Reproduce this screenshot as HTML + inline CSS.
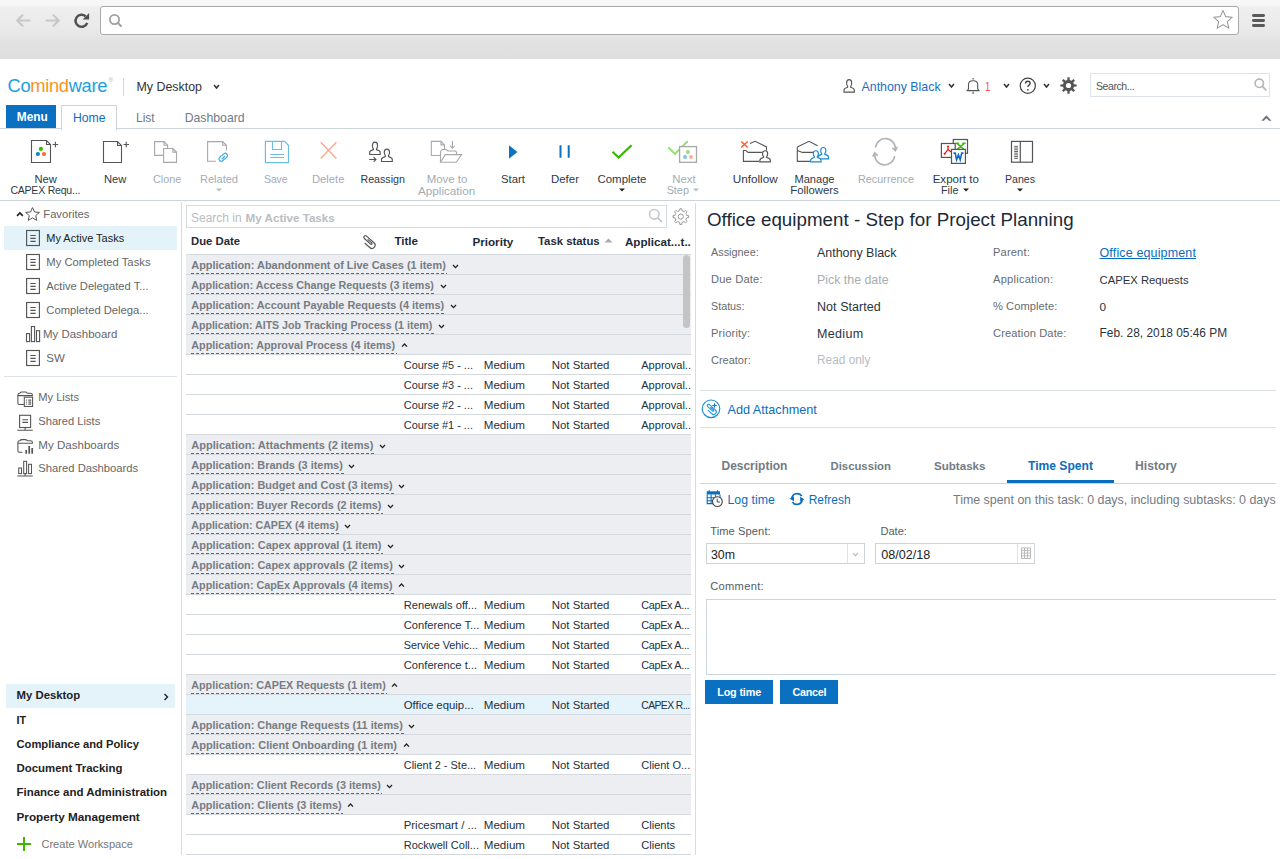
<!DOCTYPE html>
<html><head><meta charset="utf-8"><style>
html,body{margin:0;padding:0;width:1280px;height:859px;overflow:hidden;background:#fff;position:relative;font-family:"Liberation Sans",sans-serif;}
.t{position:absolute;line-height:1;white-space:nowrap;}
svg{overflow:visible}
</style></head><body>
<div style="position:absolute;left:0px;top:0px;width:1280px;height:59px;background:linear-gradient(#f8f8f8 0px,#f6f6f6 5px,#efefef 7px,#e9e9e9 30px,#e1e1e1 44px,#dfdfdf 59px);"></div><div style="position:absolute;left:100px;top:6px;width:1137px;height:27px;background:#fff;border:1px solid #a9a9a9;border-radius:3px;"></div><svg style="position:absolute;left:15px;top:13px;" width="17" height="15" viewBox="0 0 17 15" fill="none"><path d="M7.5 2.2L2.2 7.5L7.5 12.8M2.6 7.5H14.5" stroke="#c8c8c8" stroke-width="2.2" stroke-linecap="round" stroke-linejoin="round"/></svg><svg style="position:absolute;left:44px;top:13px;" width="17" height="15" viewBox="0 0 17 15" fill="none"><path d="M9.5 2.2L14.8 7.5L9.5 12.8M14.4 7.5H2.5" stroke="#c8c8c8" stroke-width="2.2" stroke-linecap="round" stroke-linejoin="round"/></svg><svg style="position:absolute;left:73px;top:12px;" width="17" height="17" viewBox="0 0 17 17" fill="none"><path d="M12.6 4.4A6 6 0 1 0 14.2 10.8" stroke="#505050" stroke-width="2.5" fill="none"/><path d="M9.6 7.6H16.1V1Z" fill="#505050"/></svg><svg style="position:absolute;left:108px;top:13px;" width="15" height="15" viewBox="0 0 15 15" fill="none"><circle cx="6.5" cy="6.5" r="4.6" stroke="#a0a0a0" stroke-width="1.8"/><path d="M10 10L13 13" stroke="#a0a0a0" stroke-width="2" stroke-linecap="round"/></svg><svg style="position:absolute;left:1212px;top:9px;" width="22" height="21" viewBox="0 0 22 21" fill="none"><path d="M11 1.5L13.7 7.6L20.3 8.2L15.3 12.6L16.8 19.1L11 15.7L5.2 19.1L6.7 12.6L1.7 8.2L8.3 7.6Z" stroke="#9a9a9a" stroke-width="1.1" stroke-linejoin="round" fill="#fff"/></svg><div style="position:absolute;left:1252px;top:14.0px;width:13px;height:2.8px;background:#5a5a5a;border-radius:1.4px;"></div><div style="position:absolute;left:1252px;top:19.0px;width:13px;height:2.8px;background:#5a5a5a;border-radius:1.4px;"></div><div style="position:absolute;left:1252px;top:24.0px;width:13px;height:2.8px;background:#5a5a5a;border-radius:1.4px;"></div><div class="t" style="left:7.5px;top:76.6px;font-size:18.3px;letter-spacing:-0.3px;color:#1b9fdf;">Co<span style="color:#f7941d">mind</span>ware</div><div class="t" style="left:108.6px;top:76.5px;font-size:6px;color:#7cc4ea;">&reg;</div><div style="position:absolute;left:123px;top:78px;width:1px;height:18px;background:#d6d6d6;"></div><svg style="position:absolute;left:212.5px;top:84px;" width="7" height="5" viewBox="0 0 7 5" fill="none"><path d="M1 1L3.5 4L6 1" stroke="#333" stroke-width="1.5" fill="none"/></svg><svg style="position:absolute;left:947.5px;top:83.3px;" width="7" height="5" viewBox="0 0 7 5" fill="none"><path d="M1 1L3.5 4L6 1" stroke="#333" stroke-width="1.5" fill="none"/></svg><svg style="position:absolute;left:965px;top:77px;" width="16" height="18" viewBox="0 0 16 18" fill="none"><path d="M1.6 13.6H14.6M2.4 13.6L3.5 11.9V7.4C3.5 5 5.300 3.7 8.1 3.7C10.9 3.7 12.7 5 12.7 7.4V11.9L13.8 13.6" stroke="#555" stroke-width="1.1" fill="none"/><path d="M8.1 1V2.6M8.1 14.7V16.9" stroke="#555" stroke-width="1.1"/></svg><svg style="position:absolute;left:1002.5px;top:83.3px;" width="7" height="5" viewBox="0 0 7 5" fill="none"><path d="M1 1L3.5 4L6 1" stroke="#333" stroke-width="1.5" fill="none"/></svg><svg style="position:absolute;left:1019px;top:77px;" width="18" height="18" viewBox="0 0 18 18" fill="none"><circle cx="8.8" cy="8.8" r="7.6" stroke="#444" stroke-width="1.2"/><path d="M6.5 6.6c0-1.4 1-2.3 2.3-2.3s2.3.9 2.3 2.1c0 1.6-2.2 1.8-2.2 3.700" stroke="#444" stroke-width="1.4" fill="none"/><circle cx="8.9" cy="12.8" r=".9" fill="#444"/></svg><svg style="position:absolute;left:1042.5px;top:83.3px;" width="7" height="5" viewBox="0 0 7 5" fill="none"><path d="M1 1L3.5 4L6 1" stroke="#333" stroke-width="1.5" fill="none"/></svg><svg style="position:absolute;left:1060px;top:77px;" width="17" height="17" viewBox="0 0 17 17" fill="none"><path d="M13.97 7.28 L16.63 7.42 L16.63 9.58 L13.97 9.72 L13.23 11.50 L15.01 13.48 L13.48 15.01 L11.50 13.23 L9.72 13.97 L9.58 16.63 L7.42 16.63 L7.28 13.97 L5.50 13.23 L3.52 15.01 L1.99 13.48 L3.77 11.50 L3.03 9.72 L0.37 9.58 L0.37 7.42 L3.03 7.28 L3.77 5.50 L1.99 3.52 L3.52 1.99 L5.50 3.77 L7.28 3.03 L7.42 0.37 L9.58 0.37 L9.72 3.03 L11.50 3.77 L13.48 1.99 L15.01 3.52 L13.23 5.50Z" fill="#555"/><circle cx="8.5" cy="8.5" r="2.6" fill="#fff"/></svg><div style="position:absolute;left:1090px;top:73px;width:178px;height:22px;background:#fff;border:1px solid #dde3e8;"></div><svg style="position:absolute;left:1254px;top:78px;" width="13" height="13" viewBox="0 0 13 13" fill="none"><circle cx="5.3" cy="5.3" r="4.2" stroke="#b5b5b5" stroke-width="1.6"/><path d="M8.4 8.4L11.8 11.8" stroke="#b5b5b5" stroke-width="1.8" stroke-linecap="round"/></svg><svg style="position:absolute;left:0;top:0;overflow:visible" width="1280" height="859"><path d="M1261.3 120.8L1266.4 115.3L1271.5 120.8H1268.9L1266.4 118.2L1263.900 120.8Z" fill="#70757f"/></svg><div style="position:absolute;left:0px;top:128px;width:1280px;height:1px;background:#ccd4db;"></div><div style="position:absolute;left:6px;top:105px;width:50px;height:23px;background:#0a70c2;"></div><div style="position:absolute;left:61px;top:105px;width:54px;height:24px;background:#fff;border:1px solid #ccd4db;border-bottom:none;"></div><div style="position:absolute;left:0px;top:200px;width:1280px;height:1px;background:#ccd4db;"></div><svg style="position:absolute;left:0;top:0;overflow:visible" width="1280" height="859" viewBox="0 0 1280 859" fill="none"><path d="M31.5 140.5H46.5L50.5 144.5V162.5H31.5Z" stroke="#555" stroke-width="1.1" fill="#fff" stroke-linejoin="miter"/><path d="M46.5 140.5V144.5H50.5" stroke="#555" stroke-width="1.1" fill="none"/><circle cx="40.9" cy="148.9" r="2.1" fill="#33c000"/><circle cx="37.9" cy="154" r="2.1" fill="#0a86c8"/><circle cx="44" cy="154" r="2.1" fill="#ff6a2a"/><path d="M52.7 144.5H58.2M55.4 141.8V147.2" stroke="#555" stroke-width="1.1"/><path d="M103.5 141.5H117.5L121.5 145.5V162.5H103.5Z" stroke="#555" stroke-width="1.1" fill="#fff" stroke-linejoin="miter"/><path d="M117.5 141.5V145.5H121.5" stroke="#555" stroke-width="1.1" fill="none"/><path d="M123.5 144.5H129M126.2 141.8V147.2" stroke="#555" stroke-width="1.1"/><path d="M154.6 141.6H164.0L167.6 145.2V155.4H154.6Z" stroke="#a8a8a8" stroke-width="1.1" fill="#fff" stroke-linejoin="miter"/><path d="M164.0 141.6V145.2H167.6" stroke="#a8a8a8" stroke-width="1.1" fill="none"/><path d="M163.6 148.5H172.9L176.5 152.1V162.4H163.6Z" stroke="#a8a8a8" stroke-width="1.1" fill="#fff" stroke-linejoin="miter"/><path d="M172.9 148.5V152.1H176.5" stroke="#a8a8a8" stroke-width="1.1" fill="none"/><path d="M215.9 161.3H207.6V141.6H222.7L226.4 145.3V150.4" stroke="#a8a8a8" stroke-width="1.1" fill="none"/><path d="M222.7 141.6V145.3H226.4" stroke="#a8a8a8" stroke-width="1.1" fill="none"/><g stroke="#3aabdf" stroke-width="1.2" fill="none"><path d="M221.6 155.4l-2.2 2.2a2.3 2.3 0 0 0 3.2 3.2l2.2-2.2"/><path d="M224.9 159.1l2.2-2.2a2.3 2.3 0 0 0-3.2-3.2l-2.2 2.2"/><path d="M221.7 159.3L225 156"/></g><g stroke="#6bbde3" stroke-width="1.2" fill="none"><path d="M265.4 141.4H284.6L288.5 145.5V162.6H265.4Z"/><path d="M272.5 141.4V149.5H281.5V141.4"/><path d="M270.2 154.5H284M270.2 157.5H284"/></g><path d="M320.7 142.2L336.4 158.6M336.4 142.2L320.7 158.6" stroke="#ffab8f" stroke-width="1.5"/><path transform="translate(843.5 79.2) scale(0.9417 1.0308)" d="M6 0.5C7.8 0.5 8.7 1.8 8.7 3.6C8.7 5.2 8.1 6.3 7.6 6.9V7.8C10 8.4 11.5 9.3 11.5 10.6V12.5H0.5V10.6C0.5 9.3 2 8.4 4.4 7.8V6.9C3.9 6.300 3.3 5.200 3.3 3.600C3.3 1.8 4.2 0.5 6 0.5Z" stroke="#555" stroke-width="1.166" fill="#fff" vector-effect="none"/><path transform="translate(369.2 141.7) scale(0.9583 1.0231)" d="M6 0.5C7.8 0.5 8.7 1.8 8.7 3.6C8.7 5.2 8.1 6.3 7.6 6.9V7.8C10 8.4 11.5 9.3 11.5 10.6V12.5H0.5V10.6C0.5 9.3 2 8.4 4.4 7.8V6.9C3.9 6.300 3.3 5.200 3.3 3.600C3.3 1.8 4.2 0.5 6 0.5Z" stroke="#555" stroke-width="1.161" fill="#fff" vector-effect="none"/><path transform="translate(381 148.6) scale(0.9833 1.0308)" d="M6 0.5C7.8 0.5 8.7 1.8 8.7 3.6C8.7 5.2 8.1 6.3 7.6 6.9V7.8C10 8.4 11.5 9.3 11.5 10.6V12.5H0.5V10.6C0.5 9.3 2 8.4 4.4 7.8V6.9C3.9 6.300 3.3 5.200 3.3 3.600C3.3 1.8 4.2 0.5 6 0.5Z" stroke="#555" stroke-width="1.142" fill="#fff" vector-effect="none"/><path d="M369.2 159.5H376M373.6 157.1L376 159.5L373.6 161.9" stroke="#555" stroke-width="1.1" fill="none"/><path d="M431.3 141.4H441.0L444.5 144.9V155.5H431.3Z" stroke="#a8a8a8" stroke-width="1.1" fill="#fff" stroke-linejoin="miter"/><path d="M441.0 141.4V144.9H444.5" stroke="#a8a8a8" stroke-width="1.1" fill="none"/><path d="M440.5 162.3V151.5L442.3 149.5H446.3L447.8 151H455.3L456.5 152.2V154.6" stroke="#a8a8a8" stroke-width="1.1" fill="#fff"/><path d="M440.5 162.3L445.2 154.6H461.6L456.3 162.3Z" stroke="#a8a8a8" stroke-width="1.1" fill="#fff"/><path d="M452.4 141V148M450.2 145.9L452.4 148.1L454.6 145.9" stroke="#a8a8a8" stroke-width="1.1" fill="none"/><path d="M509 145.2L517.4 152L509 158.8Z" fill="#0a72c0"/><path d="M560.5 145.2V157.8M568.7 145.2V157.8" stroke="#0a72c0" stroke-width="2"/><path d="M612.5 151.8L618.6 157.6L631.5 145.2" stroke="#36b800" stroke-width="2.2" fill="none"/><path d="M668.8 147.9L674.9 153.9L687.2 141.8" stroke="#93e070" stroke-width="2" fill="none" stroke-linecap="round"/><rect x="679.6" y="146.6" width="16.9" height="15.7" stroke="#a8a8a8" stroke-width="1.3" fill="#fff"/><circle cx="687.9" cy="152" r="2" fill="#9ada7a"/><circle cx="685" cy="156.9" r="2" fill="#7ec4e4"/><circle cx="691" cy="156.9" r="2" fill="#ffae90"/><path d="M750 143.4L755.1 141.3L766.5 146.9V150.5" stroke="#555" stroke-width="1.1" fill="none"/><path d="M759.4 161.4H743.4V150.5H745.8L748.1 152.4H762.2" stroke="#555" stroke-width="1.1" fill="none"/><path transform="translate(759.4 150.3) scale(0.9500 0.9308)" d="M6 0.5C7.8 0.5 8.7 1.8 8.7 3.6C8.7 5.2 8.1 6.3 7.6 6.9V7.8C10 8.4 11.5 9.3 11.5 10.6V12.5H0.5V10.6C0.5 9.3 2 8.4 4.4 7.8V6.9C3.9 6.300 3.3 5.200 3.3 3.600C3.3 1.8 4.2 0.5 6 0.5Z" stroke="#555" stroke-width="1.223" fill="#fff" vector-effect="none"/><path d="M741.2 141.5L747.7 147.5M747.7 141.5L741.2 147.5" stroke="#ff5a2a" stroke-width="1.5"/><path d="M797.3 146.9L809 141.3L817.6 145.8" stroke="#555" stroke-width="1.1" fill="none"/><path d="M810.2 161.4H797.3V146.9M797.3 150.5L802.4 152.4H813.3" stroke="#555" stroke-width="1.1" fill="none"/><path transform="translate(817.6 147.0) scale(0.9500 0.9462)" d="M6 0.5C7.8 0.5 8.7 1.8 8.7 3.6C8.7 5.2 8.1 6.3 7.6 6.9V7.8C10 8.4 11.5 9.3 11.5 10.6V12.5H0.5V10.6C0.5 9.3 2 8.4 4.4 7.8V6.9C3.9 6.300 3.3 5.200 3.3 3.600C3.3 1.8 4.2 0.5 6 0.5Z" stroke="#1a8ad4" stroke-width="1.213" fill="#fff" vector-effect="none"/><path transform="translate(810.2 150.3) scale(0.9417 0.9308)" d="M6 0.5C7.8 0.5 8.7 1.8 8.7 3.6C8.7 5.2 8.1 6.3 7.6 6.9V7.8C10 8.4 11.5 9.3 11.5 10.6V12.5H0.5V10.6C0.5 9.3 2 8.4 4.4 7.8V6.9C3.9 6.300 3.3 5.200 3.3 3.600C3.3 1.8 4.2 0.5 6 0.5Z" stroke="#1a8ad4" stroke-width="1.228" fill="#fff" vector-effect="none"/><g stroke="#b3b3b3" stroke-width="1.6" fill="none"><path d="M875.5 147.5A9.5 9.5 0 0 1 895.3 149.5"/><path d="M894.6 156A9.5 9.5 0 0 1 874.8 154"/><path d="M892.4 147.8L895.3 150.6L897.4 146.9"/><path d="M877.7 155.6L874.8 152.9L872.8 156.5"/></g><rect x="953.3" y="139.5" width="14.2" height="13.8" stroke="#555" stroke-width="1.2" fill="#fff"/><path d="M957 143.4L964.2 149.6M964.2 143.4L957 149.6M955.6 143.3H958.9M962.3 143.3H965.6" stroke="#33c000" stroke-width="1.4" fill="none"/><rect x="941.4" y="143.5" width="13.8" height="13.9" stroke="#555" stroke-width="1.2" fill="#fff"/><path d="M948 146.3V149.4L945 153.5M948 149.4L951 152" stroke="#ff0000" stroke-width="1.2" fill="none"/><circle cx="944.6" cy="153.8" r="1" fill="#f00"/><circle cx="948" cy="146.3" r=".9" fill="#f00"/><rect x="951.5" y="149.4" width="13.9" height="14" stroke="#555" stroke-width="1.2" fill="#fff"/><path d="M953.5 153.1H955.2L956.6 159.8L958.4 154.8L960.2 159.8L961.7 153.1H963.5" stroke="#0a6cc8" stroke-width="1.6" fill="none"/><rect x="1011.5" y="141.4" width="21" height="20.8" stroke="#555" stroke-width="1.2" fill="none"/><path d="M1020.3 141.4V162.2" stroke="#555" stroke-width="1.2"/><path d="M1014.2 146.4H1018 M1014.2 148.1H1018 M1014.2 149.8H1018 M1014.2 151.5H1018 M1014.2 153.2H1018 M1014.2 154.9H1018 M1014.2 156.6H1018 M1014.2 158.3H1018 " stroke="#555" stroke-width=".9"/></svg><svg style="position:absolute;left:215.4px;top:188px" width="8" height="4" viewBox="0 0 8 4"><path d="M1 0.5H7L4 3.5Z" fill="#b5bcc3"/></svg><svg style="position:absolute;left:618px;top:188.2px" width="8" height="4" viewBox="0 0 8 4"><path d="M1 0.5H7L4 3.5Z" fill="#222"/></svg><svg style="position:absolute;left:691.7px;top:188px" width="8" height="4" viewBox="0 0 8 4"><path d="M1 0.5H7L4 3.5Z" fill="#b5bcc3"/></svg><svg style="position:absolute;left:961.5px;top:188px" width="8" height="4" viewBox="0 0 8 4"><path d="M1 0.5H7L4 3.5Z" fill="#222"/></svg><svg style="position:absolute;left:1016px;top:188px" width="8" height="4" viewBox="0 0 8 4"><path d="M1 0.5H7L4 3.5Z" fill="#222"/></svg><div style="position:absolute;left:181px;top:202px;width:1px;height:653px;background:#d5dce2;"></div><svg style="position:absolute;left:15.5px;top:212.3px;" width="7.8" height="4.8" viewBox="0 0 7.8 4.8" fill="none"><path d="M1 3.8L3.9 1L6.8 3.8" stroke="#222" stroke-width="1.7" fill="none"/></svg><div style="position:absolute;left:4px;top:226px;width:173px;height:24px;background:#e4f2fa;"></div><div style="position:absolute;left:4px;top:376px;width:173px;height:1px;background:#dde3e8;"></div><svg style="position:absolute;left:0;top:0;overflow:visible" width="1280" height="859" viewBox="0 0 1280 859" fill="none"><path d="M32.5 207.6L34.5 212L39.4 212.4L35.7 215.6L36.8 220.4L32.5 217.9L28.2 220.4L29.3 215.6L25.6 212.4L30.5 212Z" stroke="#555" stroke-width="1" stroke-linejoin="round" fill="#fff"/><rect x="26.6" y="230.5" width="12.8" height="15" stroke="#555" stroke-width="1.15" fill="none"/><path d="M30.3 235.5H35.7M30.3 238.4H35.7M30.3 241.4H35.7" stroke="#555" stroke-width="1.1"/><rect x="26.6" y="254.5" width="12.8" height="15" stroke="#555" stroke-width="1.15" fill="none"/><path d="M30.3 259.5H35.7M30.3 262.4H35.7M30.3 265.4H35.7" stroke="#555" stroke-width="1.1"/><rect x="26.6" y="278.5" width="12.8" height="15" stroke="#555" stroke-width="1.15" fill="none"/><path d="M30.3 283.5H35.7M30.3 286.4H35.7M30.3 289.4H35.7" stroke="#555" stroke-width="1.1"/><rect x="26.6" y="302.5" width="12.8" height="15" stroke="#555" stroke-width="1.15" fill="none"/><path d="M30.3 307.5H35.7M30.3 310.4H35.7M30.3 313.4H35.7" stroke="#555" stroke-width="1.1"/><g stroke="#555" stroke-width="1.1" fill="none"><rect x="26.5" y="333.6" width="3.1" height="8"/><rect x="31.4" y="326.5" width="3.2" height="15.1"/><rect x="36.5" y="330.7" width="3.1" height="10.9"/></g><rect x="26.6" y="350.5" width="12.8" height="15" stroke="#555" stroke-width="1.15" fill="none"/><path d="M30.3 355.5H35.7M30.3 358.4H35.7M30.3 361.4H35.7" stroke="#555" stroke-width="1.1"/><g stroke="#555" stroke-width="1.05" fill="none"><path d="M17.9 395.6V394.9C17.9 393.6 18.8 393.2 19.8 393.2C20.3 392.2 21 392 22 392H25.3C26.2 392 26.8 392.4 27.3 393.2H30.5C31.8 393.2 32.4 393.8 32.4 395V395.6Z" stroke="#555" stroke-width="1.05" fill="none"/><path d="M17.9 395.6V403.3Q17.9 404.5 19.1 404.5H24.1"/><rect x="24.3" y="397.2" width="8.3" height="9.3" fill="#fff"/></g><path d="M26.3 400.1H27.1M28.4 400.1H31.2M26.3 402.1H27.1M28.4 402.1H31.2M26.3 404.1H27.1M28.4 404.1H31.2" stroke="#555" stroke-width="1.05"/><g stroke="#555" stroke-width="1.1" fill="none"><rect x="19.6" y="415.3" width="11" height="12.2"/><path d="M22.3 419.7H28M22.3 422.4H28M25.1 427.5V430.3M17.3 430.3H32.8"/></g><g stroke="#555" stroke-width="1.05" fill="none"><path d="M17.9 443.20000000000005V442.5C17.9 441.20000000000005 18.8 440.8 19.8 440.8C20.3 439.8 21 439.6 22 439.6H25.3C26.2 439.6 26.8 440.0 27.3 440.8H30.5C31.8 440.8 32.4 441.40000000000003 32.4 442.6V443.20000000000005Z" stroke="#555" stroke-width="1.05" fill="none"/><path d="M17.9 443.2V451Q17.9 452.2 19.1 452.2H22.5"/></g><path d="M26.2 450.1V453.8M29.2 446.1V453.8M32.2 448.1V453.8" stroke="#555" stroke-width="1.7"/><g stroke="#555" stroke-width="1.05" fill="none"><rect x="18.7" y="468" width="2.8" height="5.6"/><rect x="23.7" y="461.3" width="2.9" height="12.3"/><rect x="28.6" y="464.3" width="2.9" height="9.3"/><path d="M17.3 476H32.8M25.1 473.6V476"/></g></svg><div style="position:absolute;left:6px;top:684px;width:169px;height:24px;background:#e4f2fa;"></div><svg style="position:absolute;left:163px;top:693px;" width="6" height="8" viewBox="0 0 6 8" fill="none"><path d="M1.5 1L4.5 4L1.5 7" stroke="#222" stroke-width="1.4" fill="none"/></svg><svg style="position:absolute;left:16px;top:836px;" width="16" height="16" viewBox="0 0 16 16" fill="none"><path d="M8 1V15M1 8H15" stroke="#3cb800" stroke-width="2"/></svg><div style="position:absolute;left:186px;top:205px;width:479px;height:21px;background:#fff;border:1px solid #d3dae0;"></div><svg style="position:absolute;left:648px;top:208px;" width="15" height="15" viewBox="0 0 15 15" fill="none"><circle cx="6.3" cy="6.3" r="4.8" stroke="#c8c8c8" stroke-width="1.6"/><path d="M9.8 9.8L13.3 13.3" stroke="#c8c8c8" stroke-width="1.9" stroke-linecap="round"/></svg><svg style="position:absolute;left:672px;top:208px;" width="18" height="18" viewBox="0 0 18 18" fill="none"><path d="M14.68 7.41 L16.64 7.65 L16.64 9.55 L14.68 9.79 L13.80 11.92 L15.01 13.48 L13.68 14.81 L12.12 13.60 L9.99 14.48 L9.75 16.44 L7.85 16.44 L7.61 14.48 L5.48 13.60 L3.92 14.81 L2.59 13.48 L3.80 11.92 L2.92 9.79 L0.96 9.55 L0.96 7.65 L2.92 7.41 L3.80 5.28 L2.59 3.72 L3.92 2.39 L5.48 3.60 L7.61 2.72 L7.85 0.76 L9.75 0.76 L9.99 2.72 L12.12 3.60 L13.68 2.39 L15.01 3.72 L13.80 5.28Z" stroke="#999" stroke-width="1" fill="#fff"/><circle cx="8.8" cy="8.6" r="2.6" stroke="#999" stroke-width="1"/></svg><svg style="position:absolute;left:0;top:0;overflow:visible" width="1280" height="859" fill="none"><path transform="translate(366 238.8) rotate(42)" d="M1.8 4.0L8.6 4.0A3.2 3.2 0 0 0 8.6 -2.4L-1.4 -2.4A1.625 1.625 0 0 0 -1.4 0.85L7.0 0.85A0.8 0.8 0 0 0 7.0 -0.75L1.6 -0.75" stroke="#555" stroke-width="1.15"/></svg><svg style="position:absolute;left:604px;top:238px;" width="9" height="5" viewBox="0 0 9 5" fill="none"><path d="M0.5 4.5L4.5 0.5L8.5 4.5Z" fill="#aaa"/></svg><div style="position:absolute;left:186px;top:254px;width:505px;height:20px;background:#eceef1;"></div><div style="position:absolute;left:186px;top:254px;width:505px;height:1px;background:#d3d9de;"></div><div style="position:absolute;left:191px;top:273px;width:256.3px;height:1px;background:repeating-linear-gradient(90deg,#666 0 3px,transparent 3px 5px);"></div><svg style="position:absolute;left:451.8px;top:264px;" width="7" height="4.6" viewBox="0 0 7 4.6" fill="none"><path d="M1 1L3.5 3.6L6 1" stroke="#222" stroke-width="1.35" fill="none"/></svg><div style="position:absolute;left:186px;top:274px;width:505px;height:20px;background:#eceef1;"></div><div style="position:absolute;left:186px;top:274px;width:505px;height:1px;background:#d3d9de;"></div><div style="position:absolute;left:191px;top:293px;width:244.5px;height:1px;background:repeating-linear-gradient(90deg,#666 0 3px,transparent 3px 5px);"></div><svg style="position:absolute;left:440.0px;top:284px;" width="7" height="4.6" viewBox="0 0 7 4.6" fill="none"><path d="M1 1L3.5 3.6L6 1" stroke="#222" stroke-width="1.35" fill="none"/></svg><div style="position:absolute;left:186px;top:294px;width:505px;height:20px;background:#eceef1;"></div><div style="position:absolute;left:186px;top:294px;width:505px;height:1px;background:#d3d9de;"></div><div style="position:absolute;left:191px;top:313px;width:254.8px;height:1px;background:repeating-linear-gradient(90deg,#666 0 3px,transparent 3px 5px);"></div><svg style="position:absolute;left:450.3px;top:304px;" width="7" height="4.6" viewBox="0 0 7 4.6" fill="none"><path d="M1 1L3.5 3.6L6 1" stroke="#222" stroke-width="1.35" fill="none"/></svg><div style="position:absolute;left:186px;top:314px;width:505px;height:20px;background:#eceef1;"></div><div style="position:absolute;left:186px;top:314px;width:505px;height:1px;background:#d3d9de;"></div><div style="position:absolute;left:191px;top:333px;width:242.8px;height:1px;background:repeating-linear-gradient(90deg,#666 0 3px,transparent 3px 5px);"></div><svg style="position:absolute;left:438.3px;top:324px;" width="7" height="4.6" viewBox="0 0 7 4.6" fill="none"><path d="M1 1L3.5 3.6L6 1" stroke="#222" stroke-width="1.35" fill="none"/></svg><div style="position:absolute;left:186px;top:334px;width:505px;height:20px;background:#eceef1;"></div><div style="position:absolute;left:186px;top:334px;width:505px;height:1px;background:#d3d9de;"></div><div style="position:absolute;left:191px;top:353px;width:205.60000000000002px;height:1px;background:repeating-linear-gradient(90deg,#666 0 3px,transparent 3px 5px);"></div><svg style="position:absolute;left:401.1px;top:342.5px;" width="7" height="4.6" viewBox="0 0 7 4.6" fill="none"><path d="M1 3.6L3.5 1L6 3.6" stroke="#222" stroke-width="1.35" fill="none"/></svg><div style="position:absolute;left:186px;top:354px;width:505px;height:1px;background:#d3d9de;"></div><div style="position:absolute;left:186px;top:374px;width:505px;height:1px;background:#d3d9de;"></div><div style="position:absolute;left:186px;top:394px;width:505px;height:1px;background:#d3d9de;"></div><div style="position:absolute;left:186px;top:414px;width:505px;height:1px;background:#d3d9de;"></div><div style="position:absolute;left:186px;top:434px;width:505px;height:20px;background:#eceef1;"></div><div style="position:absolute;left:186px;top:434px;width:505px;height:1px;background:#d3d9de;"></div><div style="position:absolute;left:191px;top:453px;width:183.8px;height:1px;background:repeating-linear-gradient(90deg,#666 0 3px,transparent 3px 5px);"></div><svg style="position:absolute;left:379.3px;top:444px;" width="7" height="4.6" viewBox="0 0 7 4.6" fill="none"><path d="M1 1L3.5 3.6L6 1" stroke="#222" stroke-width="1.35" fill="none"/></svg><div style="position:absolute;left:186px;top:454px;width:505px;height:20px;background:#eceef1;"></div><div style="position:absolute;left:186px;top:454px;width:505px;height:1px;background:#d3d9de;"></div><div style="position:absolute;left:191px;top:473px;width:152.8px;height:1px;background:repeating-linear-gradient(90deg,#666 0 3px,transparent 3px 5px);"></div><svg style="position:absolute;left:348.3px;top:464px;" width="7" height="4.6" viewBox="0 0 7 4.6" fill="none"><path d="M1 1L3.5 3.6L6 1" stroke="#222" stroke-width="1.35" fill="none"/></svg><div style="position:absolute;left:186px;top:474px;width:505px;height:20px;background:#eceef1;"></div><div style="position:absolute;left:186px;top:474px;width:505px;height:1px;background:#d3d9de;"></div><div style="position:absolute;left:191px;top:493px;width:202.8px;height:1px;background:repeating-linear-gradient(90deg,#666 0 3px,transparent 3px 5px);"></div><svg style="position:absolute;left:398.3px;top:484px;" width="7" height="4.6" viewBox="0 0 7 4.6" fill="none"><path d="M1 1L3.5 3.6L6 1" stroke="#222" stroke-width="1.35" fill="none"/></svg><div style="position:absolute;left:186px;top:494px;width:505px;height:20px;background:#eceef1;"></div><div style="position:absolute;left:186px;top:494px;width:505px;height:1px;background:#d3d9de;"></div><div style="position:absolute;left:191px;top:513px;width:191.60000000000002px;height:1px;background:repeating-linear-gradient(90deg,#666 0 3px,transparent 3px 5px);"></div><svg style="position:absolute;left:387.1px;top:504px;" width="7" height="4.6" viewBox="0 0 7 4.6" fill="none"><path d="M1 1L3.5 3.6L6 1" stroke="#222" stroke-width="1.35" fill="none"/></svg><div style="position:absolute;left:186px;top:514px;width:505px;height:20px;background:#eceef1;"></div><div style="position:absolute;left:186px;top:514px;width:505px;height:1px;background:#d3d9de;"></div><div style="position:absolute;left:191px;top:533px;width:148.60000000000002px;height:1px;background:repeating-linear-gradient(90deg,#666 0 3px,transparent 3px 5px);"></div><svg style="position:absolute;left:344.1px;top:524px;" width="7" height="4.6" viewBox="0 0 7 4.6" fill="none"><path d="M1 1L3.5 3.6L6 1" stroke="#222" stroke-width="1.35" fill="none"/></svg><div style="position:absolute;left:186px;top:534px;width:505px;height:20px;background:#eceef1;"></div><div style="position:absolute;left:186px;top:534px;width:505px;height:1px;background:#d3d9de;"></div><div style="position:absolute;left:191px;top:553px;width:191.60000000000002px;height:1px;background:repeating-linear-gradient(90deg,#666 0 3px,transparent 3px 5px);"></div><svg style="position:absolute;left:387.1px;top:544px;" width="7" height="4.6" viewBox="0 0 7 4.6" fill="none"><path d="M1 1L3.5 3.6L6 1" stroke="#222" stroke-width="1.35" fill="none"/></svg><div style="position:absolute;left:186px;top:554px;width:505px;height:20px;background:#eceef1;"></div><div style="position:absolute;left:186px;top:554px;width:505px;height:1px;background:#d3d9de;"></div><div style="position:absolute;left:191px;top:573px;width:202.8px;height:1px;background:repeating-linear-gradient(90deg,#666 0 3px,transparent 3px 5px);"></div><svg style="position:absolute;left:398.3px;top:564px;" width="7" height="4.6" viewBox="0 0 7 4.6" fill="none"><path d="M1 1L3.5 3.6L6 1" stroke="#222" stroke-width="1.35" fill="none"/></svg><div style="position:absolute;left:186px;top:574px;width:505px;height:20px;background:#eceef1;"></div><div style="position:absolute;left:186px;top:574px;width:505px;height:1px;background:#d3d9de;"></div><div style="position:absolute;left:191px;top:593px;width:202.8px;height:1px;background:repeating-linear-gradient(90deg,#666 0 3px,transparent 3px 5px);"></div><svg style="position:absolute;left:398.3px;top:582.5px;" width="7" height="4.6" viewBox="0 0 7 4.6" fill="none"><path d="M1 3.6L3.5 1L6 3.6" stroke="#222" stroke-width="1.35" fill="none"/></svg><div style="position:absolute;left:186px;top:594px;width:505px;height:1px;background:#d3d9de;"></div><div style="position:absolute;left:186px;top:614px;width:505px;height:1px;background:#d3d9de;"></div><div style="position:absolute;left:186px;top:634px;width:505px;height:1px;background:#d3d9de;"></div><div style="position:absolute;left:186px;top:654px;width:505px;height:1px;background:#d3d9de;"></div><div style="position:absolute;left:186px;top:674px;width:505px;height:20px;background:#eceef1;"></div><div style="position:absolute;left:186px;top:674px;width:505px;height:1px;background:#d3d9de;"></div><div style="position:absolute;left:191px;top:693px;width:195.8px;height:1px;background:repeating-linear-gradient(90deg,#666 0 3px,transparent 3px 5px);"></div><svg style="position:absolute;left:391.3px;top:682.5px;" width="7" height="4.6" viewBox="0 0 7 4.6" fill="none"><path d="M1 3.6L3.5 1L6 3.6" stroke="#222" stroke-width="1.35" fill="none"/></svg><div style="position:absolute;left:186px;top:694px;width:505px;height:20px;background:#e5f3fb;"></div><div style="position:absolute;left:186px;top:694px;width:505px;height:1px;background:#d3d9de;"></div><div style="position:absolute;left:186px;top:714px;width:505px;height:20px;background:#eceef1;"></div><div style="position:absolute;left:186px;top:714px;width:505px;height:1px;background:#d3d9de;"></div><div style="position:absolute;left:191px;top:733px;width:212.7px;height:1px;background:repeating-linear-gradient(90deg,#666 0 3px,transparent 3px 5px);"></div><svg style="position:absolute;left:408.2px;top:724px;" width="7" height="4.6" viewBox="0 0 7 4.6" fill="none"><path d="M1 1L3.5 3.6L6 1" stroke="#222" stroke-width="1.35" fill="none"/></svg><div style="position:absolute;left:186px;top:734px;width:505px;height:20px;background:#eceef1;"></div><div style="position:absolute;left:186px;top:734px;width:505px;height:1px;background:#d3d9de;"></div><div style="position:absolute;left:191px;top:753px;width:207.0px;height:1px;background:repeating-linear-gradient(90deg,#666 0 3px,transparent 3px 5px);"></div><svg style="position:absolute;left:402.5px;top:742.5px;" width="7" height="4.6" viewBox="0 0 7 4.6" fill="none"><path d="M1 3.6L3.5 1L6 3.6" stroke="#222" stroke-width="1.35" fill="none"/></svg><div style="position:absolute;left:186px;top:754px;width:505px;height:1px;background:#d3d9de;"></div><div style="position:absolute;left:186px;top:774px;width:505px;height:20px;background:#eceef1;"></div><div style="position:absolute;left:186px;top:774px;width:505px;height:1px;background:#d3d9de;"></div><div style="position:absolute;left:191px;top:793px;width:190.7px;height:1px;background:repeating-linear-gradient(90deg,#666 0 3px,transparent 3px 5px);"></div><svg style="position:absolute;left:386.2px;top:784px;" width="7" height="4.6" viewBox="0 0 7 4.6" fill="none"><path d="M1 1L3.5 3.6L6 1" stroke="#222" stroke-width="1.35" fill="none"/></svg><div style="position:absolute;left:186px;top:794px;width:505px;height:20px;background:#eceef1;"></div><div style="position:absolute;left:186px;top:794px;width:505px;height:1px;background:#d3d9de;"></div><div style="position:absolute;left:191px;top:813px;width:151.5px;height:1px;background:repeating-linear-gradient(90deg,#666 0 3px,transparent 3px 5px);"></div><svg style="position:absolute;left:347.0px;top:802.5px;" width="7" height="4.6" viewBox="0 0 7 4.6" fill="none"><path d="M1 3.6L3.5 1L6 3.6" stroke="#222" stroke-width="1.35" fill="none"/></svg><div style="position:absolute;left:186px;top:814px;width:505px;height:1px;background:#d3d9de;"></div><div style="position:absolute;left:186px;top:834px;width:505px;height:1px;background:#d3d9de;"></div><div style="position:absolute;left:186px;top:854px;width:505px;height:1px;background:#d3d9de;"></div><div style="position:absolute;left:682.5px;top:255px;width:7.3px;height:72.5px;background:#c4c4c4;border-radius:3.5px;"></div><div style="position:absolute;left:695px;top:203px;width:1px;height:652px;background:#d5dce2;"></div><div style="position:absolute;left:700px;top:390px;width:576px;height:1px;background:#d9dee3;"></div><svg style="position:absolute;left:0;top:0;overflow:visible" width="1280" height="859" fill="none"><circle cx="711" cy="408.8" r="8.8" stroke="#1a8ad4" stroke-width="1.15"/><path transform="translate(709 406.8) rotate(42) scale(0.8)" d="M1.8 4.0L8.6 4.0A3.2 3.2 0 0 0 8.6 -2.4L-1.4 -2.4A1.625 1.625 0 0 0 -1.4 0.85L7.0 0.85A0.8 0.8 0 0 0 7.0 -0.75L1.6 -0.75" stroke="#2a9ade" stroke-width="1.4"/><path d="M712.2 405.5H716.8M714.5 403.2V407.8" stroke="#1a7cc8" stroke-width="1.2"/></svg><div style="position:absolute;left:700px;top:427px;width:576px;height:1px;background:#d9dee3;"></div><div style="position:absolute;left:700px;top:483px;width:576px;height:1px;background:#ccd4db;"></div><div style="position:absolute;left:1007px;top:480px;width:107px;height:3px;background:#0a6ebd;"></div><svg style="position:absolute;left:0;top:0;overflow:visible" width="1280" height="859" fill="none"><rect x="706.7" y="491.3" width="13.3" height="3.2" fill="#0a6ebd"/><path d="M709.2 490V492M717.6 490V492" stroke="#0a6ebd" stroke-width="1"/><path d="M707.2 494.5V503.6H720V494.5M711.1 494.5V503.6M715.5 494.5V503.6M707.2 497.7H720M707.2 500.800H720" stroke="#0a6ebd" stroke-width="1.1"/><circle cx="717.4" cy="501.6" r="4.9" fill="#fff" stroke="#444" stroke-width="1.1"/><path d="M717.2 498.6V502H719.9" stroke="#444" stroke-width="1"/><path d="M801.6 496.2A5.2 5.2 0 0 0 791.9 498.6M792.4 501.8A5.2 5.2 0 0 0 802.1 499.4" stroke="#0a6ebd" stroke-width="1.7"/><path d="M789.6 498.8L793.9 496.2L794 501.2Z" fill="#0a6ebd"/><path d="M804.4 499.2L800.1 496.800L800.2 501.8Z" fill="#0a6ebd"/></svg><div style="position:absolute;left:705.5px;top:543px;width:157px;height:19px;background:#fff;border:1px solid #ccd4db;"></div><div style="position:absolute;left:847px;top:544px;width:1px;height:19px;background:#dde3e8;"></div><svg style="position:absolute;left:852px;top:552px;" width="7" height="4.8" viewBox="0 0 7 4.8" fill="none"><path d="M1 1L3.5 3.8L6 1" stroke="#aaa" stroke-width="1.1" fill="none"/></svg><div style="position:absolute;left:875px;top:543px;width:158px;height:19px;background:#fff;border:1px solid #ccd4db;"></div><div style="position:absolute;left:1017px;top:544px;width:1px;height:19px;background:#dde3e8;"></div><svg style="position:absolute;left:1021px;top:547px;" width="11" height="12" viewBox="0 0 11 12" fill="none"><g stroke="#b5b5b5" stroke-width=".9" fill="none"><rect x="0.5" y="1" width="9" height="10.5"/><path d="M0.5 3.6H9.5M0.5 6.2H9.5M0.5 8.8H9.5M3.5 1V11.5M6.5 1V11.5"/></g></svg><div style="position:absolute;left:705.5px;top:599px;width:575px;height:74px;background:#fff;border:1px solid #ccd4db;"></div><div style="position:absolute;left:704.9px;top:680px;width:68.1px;height:24px;background:#0a70c2;"></div><div style="position:absolute;left:780px;top:680px;width:57.9px;height:24px;background:#0a70c2;"></div><div style="position:absolute;left:1276px;top:203px;width:4px;height:656px;background:#fff;"></div>
<div class="t" style="left:136.50px;top:81.20px;font-size:12.41px;font-weight:normal;color:#333;letter-spacing:0.000px;">My Desktop</div><div class="t" style="left:861.50px;top:81.21px;font-size:12.39px;font-weight:normal;color:#1a6fbf;letter-spacing:0.000px;">Anthony Black</div><div class="t" style="left:985.20px;top:80.84px;font-size:12.00px;font-weight:normal;color:#f05050;transform:scaleX(0.8);transform-origin:left;">1</div><div class="t" style="left:1096.00px;top:80.75px;font-size:10.57px;font-weight:normal;color:#555;letter-spacing:-0.450px;">Search...</div><div class="t" style="left:16.80px;top:112.05px;font-size:11.87px;font-weight:bold;color:#fff;letter-spacing:0.000px;">Menu</div><div class="t" style="left:73.00px;top:111.85px;font-size:12.22px;font-weight:normal;color:#0a6ebd;letter-spacing:0.000px;">Home</div><div class="t" style="left:136.00px;top:112.03px;font-size:12.02px;font-weight:normal;color:#6e7b88;letter-spacing:0.000px;">List</div><div class="t" style="left:184.70px;top:111.82px;font-size:12.26px;font-weight:normal;color:#6e7b88;letter-spacing:0.000px;">Dashboard</div><div class="t" style="left:34.50px;top:173.92px;font-size:11.20px;font-weight:normal;color:#2d3a48;letter-spacing:0.000px;">New</div><div class="t" style="left:10.40px;top:185.49px;font-size:10.53px;font-weight:normal;color:#2d3a48;letter-spacing:-0.213px;">CAPEX Requ...</div><div class="t" style="left:103.90px;top:173.92px;font-size:11.20px;font-weight:normal;color:#2d3a48;letter-spacing:0.000px;">New</div><div class="t" style="left:152.90px;top:174.20px;font-size:10.87px;font-weight:normal;color:#a3acb5;letter-spacing:0.000px;">Clone</div><div class="t" style="left:200.00px;top:174.07px;font-size:11.02px;font-weight:normal;color:#a3acb5;letter-spacing:-0.000px;">Related</div><div class="t" style="left:264.05px;top:174.49px;font-size:10.53px;font-weight:normal;color:#a3acb5;letter-spacing:-0.165px;">Save</div><div class="t" style="left:311.95px;top:173.88px;font-size:11.24px;font-weight:normal;color:#a3acb5;letter-spacing:0.000px;">Delete</div><div class="t" style="left:360.45px;top:174.36px;font-size:10.67px;font-weight:normal;color:#2d3a48;letter-spacing:0.000px;">Reassign</div><div class="t" style="left:426.65px;top:173.71px;font-size:11.44px;font-weight:normal;color:#a3acb5;letter-spacing:0.000px;">Move to</div><div class="t" style="left:418.00px;top:184.50px;font-size:11.69px;font-weight:normal;color:#a3acb5;letter-spacing:0.000px;">Application</div><div class="t" style="left:501.00px;top:173.78px;font-size:11.36px;font-weight:normal;color:#2d3a48;letter-spacing:0.000px;">Start</div><div class="t" style="left:551.00px;top:173.71px;font-size:11.45px;font-weight:normal;color:#2d3a48;letter-spacing:0.000px;">Defer</div><div class="t" style="left:597.50px;top:173.71px;font-size:11.45px;font-weight:normal;color:#2d3a48;letter-spacing:0.000px;">Complete</div><div class="t" style="left:672.30px;top:173.77px;font-size:11.38px;font-weight:normal;color:#a3acb5;letter-spacing:0.000px;">Next</div><div class="t" style="left:666.65px;top:185.22px;font-size:10.84px;font-weight:normal;color:#a3acb5;letter-spacing:0.000px;">Step</div><div class="t" style="left:732.70px;top:173.47px;font-size:11.73px;font-weight:normal;color:#2d3a48;letter-spacing:0.000px;">Unfollow</div><div class="t" style="left:794.45px;top:174.01px;font-size:11.10px;font-weight:normal;color:#2d3a48;letter-spacing:0.000px;">Manage</div><div class="t" style="left:790.25px;top:184.80px;font-size:11.33px;font-weight:normal;color:#2d3a48;letter-spacing:0.000px;">Followers</div><div class="t" style="left:858.00px;top:174.23px;font-size:10.83px;font-weight:normal;color:#a3acb5;letter-spacing:0.000px;">Recurrence</div><div class="t" style="left:932.65px;top:173.61px;font-size:11.57px;font-weight:normal;color:#2d3a48;letter-spacing:0.000px;">Export to</div><div class="t" style="left:941.00px;top:185.26px;font-size:10.80px;font-weight:normal;color:#2d3a48;letter-spacing:0.000px;">File</div><div class="t" style="left:1005.00px;top:174.44px;font-size:10.58px;font-weight:normal;color:#2d3a48;letter-spacing:0.000px;">Panes</div><div class="t" style="left:43.30px;top:208.91px;font-size:11.21px;font-weight:normal;color:#666;letter-spacing:0.000px;">Favorites</div><div class="t" style="left:46.30px;top:233.21px;font-size:10.98px;font-weight:normal;color:#222;letter-spacing:0.000px;">My Active Tasks</div><div class="t" style="left:46.30px;top:256.98px;font-size:11.25px;font-weight:normal;color:#666;letter-spacing:0.000px;">My Completed Tasks</div><div class="t" style="left:46.30px;top:281.04px;font-size:11.18px;font-weight:normal;color:#666;letter-spacing:0.000px;">Active Delegated T...</div><div class="t" style="left:46.30px;top:304.98px;font-size:11.24px;font-weight:normal;color:#666;letter-spacing:0.000px;">Completed Delega...</div><div class="t" style="left:43.00px;top:328.80px;font-size:11.46px;font-weight:normal;color:#666;letter-spacing:0.000px;">My Dashboard</div><div class="t" style="left:46.30px;top:352.77px;font-size:11.50px;font-weight:normal;color:#666;">SW</div><div class="t" style="left:38.30px;top:391.60px;font-size:11.10px;font-weight:normal;color:#666;letter-spacing:0.000px;">My Lists</div><div class="t" style="left:38.30px;top:415.76px;font-size:11.15px;font-weight:normal;color:#666;letter-spacing:0.000px;">Shared Lists</div><div class="t" style="left:38.30px;top:439.66px;font-size:11.57px;font-weight:normal;color:#666;letter-spacing:0.000px;">My Dashboards</div><div class="t" style="left:38.30px;top:463.38px;font-size:11.24px;font-weight:normal;color:#666;letter-spacing:0.000px;">Shared Dashboards</div><div class="t" style="left:16.50px;top:689.68px;font-size:11.37px;font-weight:bold;color:#222;letter-spacing:0.000px;">My Desktop</div><div class="t" style="left:16.50px;top:714.85px;font-size:10.81px;font-weight:bold;color:#222;letter-spacing:-0.107px;">IT</div><div class="t" style="left:16.50px;top:739.23px;font-size:11.19px;font-weight:bold;color:#222;letter-spacing:0.000px;">Compliance and Policy</div><div class="t" style="left:16.50px;top:763.03px;font-size:11.42px;font-weight:bold;color:#222;letter-spacing:0.000px;">Document Tracking</div><div class="t" style="left:16.50px;top:786.98px;font-size:11.48px;font-weight:bold;color:#222;letter-spacing:0.000px;">Finance and Administration</div><div class="t" style="left:16.50px;top:810.76px;font-size:11.74px;font-weight:bold;color:#222;letter-spacing:-0.000px;">Property Management</div><div class="t" style="left:41.40px;top:839.12px;font-size:11.09px;font-weight:normal;color:#777;letter-spacing:0.000px;">Create Workspace</div><div class="t" style="left:191.00px;top:211.54px;font-size:12.00px;font-weight:normal;color:#b8bdc3;letter-spacing:0.000px;">Search in</div><div class="t" style="left:245.60px;top:211.85px;font-size:11.64px;font-weight:bold;color:#b8bdc3;letter-spacing:0.000px;">My Active Tasks</div><div class="t" style="left:191.00px;top:235.89px;font-size:11.35px;font-weight:bold;color:#1f2b38;letter-spacing:0.000px;">Due Date</div><div class="t" style="left:394.40px;top:235.70px;font-size:11.58px;font-weight:bold;color:#1f2b38;letter-spacing:0.000px;">Title</div><div class="t" style="left:472.40px;top:235.63px;font-size:11.66px;font-weight:bold;color:#1f2b38;letter-spacing:0.011px;">Priority</div><div class="t" style="left:538.00px;top:235.88px;font-size:11.37px;font-weight:bold;color:#1f2b38;letter-spacing:-0.000px;">Task status</div><div class="t" style="left:624.90px;top:235.64px;font-size:11.65px;font-weight:bold;color:#1f2b38;letter-spacing:0.000px;">Applicat...t..</div><div class="t" style="left:191.30px;top:260.05px;font-size:10.93px;font-weight:bold;color:#777c83;letter-spacing:0.000px;">Application: Abandonment of Live Cases (1 item)</div><div class="t" style="left:191.30px;top:280.22px;font-size:10.73px;font-weight:bold;color:#777c83;letter-spacing:0.000px;">Application: Access Change Requests (3 items)</div><div class="t" style="left:191.30px;top:300.08px;font-size:10.89px;font-weight:bold;color:#777c83;letter-spacing:0.000px;">Application: Account Payable Requests (4 items)</div><div class="t" style="left:191.30px;top:320.32px;font-size:10.60px;font-weight:bold;color:#777c83;letter-spacing:0.000px;">Application: AITS Job Tracking Process (1 item)</div><div class="t" style="left:191.30px;top:340.17px;font-size:10.79px;font-weight:bold;color:#777c83;letter-spacing:-0.000px;">Application: Approval Process (4 items)</div><div class="t" style="left:403.75px;top:360.05px;font-size:10.93px;font-weight:normal;color:#22303d;letter-spacing:0.000px;">Course #5 - ...</div><div class="t" style="left:483.75px;top:359.48px;font-size:11.60px;font-weight:normal;color:#22303d;letter-spacing:0.000px;">Medium</div><div class="t" style="left:551.75px;top:359.64px;font-size:11.42px;font-weight:normal;color:#22303d;letter-spacing:-0.000px;">Not Started</div><div class="t" style="left:641.25px;top:359.95px;font-size:11.05px;font-weight:normal;color:#22303d;letter-spacing:0.000px;">Approval..</div><div class="t" style="left:403.75px;top:380.05px;font-size:10.93px;font-weight:normal;color:#22303d;letter-spacing:0.000px;">Course #3 - ...</div><div class="t" style="left:483.75px;top:379.48px;font-size:11.60px;font-weight:normal;color:#22303d;letter-spacing:0.000px;">Medium</div><div class="t" style="left:551.75px;top:379.64px;font-size:11.42px;font-weight:normal;color:#22303d;letter-spacing:-0.000px;">Not Started</div><div class="t" style="left:641.25px;top:379.95px;font-size:11.05px;font-weight:normal;color:#22303d;letter-spacing:0.000px;">Approval..</div><div class="t" style="left:403.75px;top:400.05px;font-size:10.93px;font-weight:normal;color:#22303d;letter-spacing:0.000px;">Course #2 - ...</div><div class="t" style="left:483.75px;top:399.48px;font-size:11.60px;font-weight:normal;color:#22303d;letter-spacing:0.000px;">Medium</div><div class="t" style="left:551.75px;top:399.64px;font-size:11.42px;font-weight:normal;color:#22303d;letter-spacing:-0.000px;">Not Started</div><div class="t" style="left:641.25px;top:399.95px;font-size:11.05px;font-weight:normal;color:#22303d;letter-spacing:0.000px;">Approval..</div><div class="t" style="left:403.75px;top:420.05px;font-size:10.93px;font-weight:normal;color:#22303d;letter-spacing:0.000px;">Course #1 - ...</div><div class="t" style="left:483.75px;top:419.48px;font-size:11.60px;font-weight:normal;color:#22303d;letter-spacing:0.000px;">Medium</div><div class="t" style="left:551.75px;top:419.64px;font-size:11.42px;font-weight:normal;color:#22303d;letter-spacing:-0.000px;">Not Started</div><div class="t" style="left:641.25px;top:419.95px;font-size:11.05px;font-weight:normal;color:#22303d;letter-spacing:0.000px;">Approval..</div><div class="t" style="left:191.30px;top:439.93px;font-size:11.07px;font-weight:bold;color:#777c83;letter-spacing:0.000px;">Application: Attachments (2 items)</div><div class="t" style="left:191.30px;top:460.06px;font-size:10.91px;font-weight:bold;color:#777c83;letter-spacing:0.000px;">Application: Brands (3 items)</div><div class="t" style="left:191.30px;top:480.05px;font-size:10.93px;font-weight:bold;color:#777c83;letter-spacing:0.000px;">Application: Budget and Cost (3 items)</div><div class="t" style="left:191.30px;top:500.12px;font-size:10.84px;font-weight:bold;color:#777c83;letter-spacing:0.000px;">Application: Buyer Records (2 items)</div><div class="t" style="left:191.30px;top:520.32px;font-size:10.61px;font-weight:bold;color:#777c83;letter-spacing:-0.000px;">Application: CAPEX (4 items)</div><div class="t" style="left:191.30px;top:540.00px;font-size:10.98px;font-weight:bold;color:#777c83;letter-spacing:0.000px;">Application: Capex approval (1 item)</div><div class="t" style="left:191.30px;top:560.05px;font-size:10.93px;font-weight:bold;color:#777c83;letter-spacing:0.000px;">Application: Capex approvals (2 items)</div><div class="t" style="left:191.30px;top:580.19px;font-size:10.77px;font-weight:bold;color:#777c83;letter-spacing:0.000px;">Application: CapEx Approvals (4 items)</div><div class="t" style="left:403.75px;top:599.88px;font-size:11.13px;font-weight:normal;color:#22303d;letter-spacing:0.000px;">Renewals off...</div><div class="t" style="left:483.75px;top:599.48px;font-size:11.60px;font-weight:normal;color:#22303d;letter-spacing:0.000px;">Medium</div><div class="t" style="left:551.75px;top:599.64px;font-size:11.42px;font-weight:normal;color:#22303d;letter-spacing:-0.000px;">Not Started</div><div class="t" style="left:641.25px;top:600.15px;font-size:10.81px;font-weight:normal;color:#22303d;letter-spacing:-0.297px;">CapEx A...</div><div class="t" style="left:403.75px;top:619.84px;font-size:11.18px;font-weight:normal;color:#22303d;letter-spacing:0.000px;">Conference T...</div><div class="t" style="left:483.75px;top:619.48px;font-size:11.60px;font-weight:normal;color:#22303d;letter-spacing:0.000px;">Medium</div><div class="t" style="left:551.75px;top:619.64px;font-size:11.42px;font-weight:normal;color:#22303d;letter-spacing:-0.000px;">Not Started</div><div class="t" style="left:641.25px;top:620.15px;font-size:10.81px;font-weight:normal;color:#22303d;letter-spacing:-0.297px;">CapEx A...</div><div class="t" style="left:403.75px;top:640.15px;font-size:10.81px;font-weight:normal;color:#22303d;letter-spacing:-0.007px;">Service Vehic...</div><div class="t" style="left:483.75px;top:639.48px;font-size:11.60px;font-weight:normal;color:#22303d;letter-spacing:0.000px;">Medium</div><div class="t" style="left:551.75px;top:639.64px;font-size:11.42px;font-weight:normal;color:#22303d;letter-spacing:-0.000px;">Not Started</div><div class="t" style="left:641.25px;top:640.15px;font-size:10.81px;font-weight:normal;color:#22303d;letter-spacing:-0.297px;">CapEx A...</div><div class="t" style="left:403.75px;top:659.83px;font-size:11.19px;font-weight:normal;color:#22303d;letter-spacing:0.000px;">Conference t...</div><div class="t" style="left:483.75px;top:659.48px;font-size:11.60px;font-weight:normal;color:#22303d;letter-spacing:0.000px;">Medium</div><div class="t" style="left:551.75px;top:659.64px;font-size:11.42px;font-weight:normal;color:#22303d;letter-spacing:-0.000px;">Not Started</div><div class="t" style="left:641.25px;top:660.15px;font-size:10.81px;font-weight:normal;color:#22303d;letter-spacing:-0.297px;">CapEx A...</div><div class="t" style="left:191.30px;top:680.21px;font-size:10.74px;font-weight:bold;color:#777c83;letter-spacing:0.000px;">Application: CAPEX Requests (1 item)</div><div class="t" style="left:403.75px;top:699.68px;font-size:11.36px;font-weight:normal;color:#22303d;letter-spacing:0.000px;">Office equip...</div><div class="t" style="left:483.75px;top:699.48px;font-size:11.60px;font-weight:normal;color:#22303d;letter-spacing:0.000px;">Medium</div><div class="t" style="left:551.75px;top:699.64px;font-size:11.42px;font-weight:normal;color:#22303d;letter-spacing:-0.000px;">Not Started</div><div class="t" style="left:641.25px;top:700.54px;font-size:10.35px;font-weight:normal;color:#22303d;letter-spacing:-0.563px;">CAPEX R...</div><div class="t" style="left:191.30px;top:720.07px;font-size:10.91px;font-weight:bold;color:#777c83;letter-spacing:0.000px;">Application: Change Requests (11 items)</div><div class="t" style="left:191.30px;top:739.94px;font-size:11.06px;font-weight:bold;color:#777c83;letter-spacing:0.000px;">Application: Client Onboarding (1 item)</div><div class="t" style="left:403.75px;top:760.03px;font-size:10.95px;font-weight:normal;color:#22303d;letter-spacing:0.000px;">Client 2 - Ste...</div><div class="t" style="left:483.75px;top:759.48px;font-size:11.60px;font-weight:normal;color:#22303d;letter-spacing:0.000px;">Medium</div><div class="t" style="left:551.75px;top:759.64px;font-size:11.42px;font-weight:normal;color:#22303d;letter-spacing:-0.000px;">Not Started</div><div class="t" style="left:641.25px;top:759.97px;font-size:11.02px;font-weight:normal;color:#22303d;letter-spacing:0.000px;">Client O...</div><div class="t" style="left:191.30px;top:780.13px;font-size:10.83px;font-weight:bold;color:#777c83;letter-spacing:0.000px;">Application: Client Records (3 items)</div><div class="t" style="left:191.30px;top:800.07px;font-size:10.91px;font-weight:bold;color:#777c83;letter-spacing:0.000px;">Application: Clients (3 items)</div><div class="t" style="left:403.75px;top:819.69px;font-size:11.36px;font-weight:normal;color:#22303d;letter-spacing:0.000px;">Pricesmart / ...</div><div class="t" style="left:483.75px;top:819.48px;font-size:11.60px;font-weight:normal;color:#22303d;letter-spacing:0.000px;">Medium</div><div class="t" style="left:551.75px;top:819.64px;font-size:11.42px;font-weight:normal;color:#22303d;letter-spacing:-0.000px;">Not Started</div><div class="t" style="left:641.25px;top:819.91px;font-size:11.09px;font-weight:normal;color:#22303d;letter-spacing:0.000px;">Clients</div><div class="t" style="left:403.75px;top:839.99px;font-size:11.00px;font-weight:normal;color:#22303d;letter-spacing:0.000px;">Rockwell Coll...</div><div class="t" style="left:483.75px;top:839.48px;font-size:11.60px;font-weight:normal;color:#22303d;letter-spacing:0.000px;">Medium</div><div class="t" style="left:551.75px;top:839.64px;font-size:11.42px;font-weight:normal;color:#22303d;letter-spacing:-0.000px;">Not Started</div><div class="t" style="left:641.25px;top:839.91px;font-size:11.09px;font-weight:normal;color:#22303d;letter-spacing:0.000px;">Clients</div><div class="t" style="left:706.90px;top:210.82px;font-size:18.76px;font-weight:normal;color:#1c2a38;letter-spacing:0.030px;">Office equipment - Step for Project Planning</div><div class="t" style="left:711.00px;top:247.10px;font-size:10.87px;font-weight:normal;color:#666c72;letter-spacing:0.000px;">Assignee:</div><div class="t" style="left:817.00px;top:247.16px;font-size:12.45px;font-weight:normal;color:#2a3440;letter-spacing:0.000px;">Anthony Black</div><div class="t" style="left:711.00px;top:273.78px;font-size:11.13px;font-weight:normal;color:#666c72;letter-spacing:0.173px;">Due Date:</div><div class="t" style="left:817.00px;top:274.12px;font-size:12.38px;font-weight:normal;color:#a9adb2;letter-spacing:0.000px;">Pick the date</div><div class="t" style="left:711.00px;top:300.99px;font-size:10.76px;font-weight:normal;color:#666c72;letter-spacing:0.000px;">Status:</div><div class="t" style="left:817.00px;top:300.91px;font-size:12.51px;font-weight:normal;color:#2a3440;letter-spacing:0.053px;">Not Started</div><div class="t" style="left:711.00px;top:327.58px;font-size:11.13px;font-weight:normal;color:#666c72;letter-spacing:0.185px;">Priority:</div><div class="t" style="left:817.00px;top:327.81px;font-size:12.51px;font-weight:normal;color:#2a3440;letter-spacing:0.343px;">Medium</div><div class="t" style="left:711.00px;top:354.60px;font-size:10.99px;font-weight:normal;color:#666c72;letter-spacing:0.000px;">Creator:</div><div class="t" style="left:817.00px;top:355.26px;font-size:11.86px;font-weight:normal;color:#b8bcc0;letter-spacing:0.000px;">Read only</div><div class="t" style="left:993.00px;top:246.88px;font-size:11.13px;font-weight:normal;color:#666c72;letter-spacing:0.153px;">Parent:</div><div class="t" style="left:1099.50px;top:247.11px;font-size:12.51px;font-weight:normal;color:#0a6ebd;letter-spacing:0.145px;text-decoration:underline;">Office equipment</div><div class="t" style="left:993.00px;top:273.78px;font-size:11.13px;font-weight:normal;color:#666c72;letter-spacing:0.233px;">Application:</div><div class="t" style="left:1099.50px;top:275.04px;font-size:11.29px;font-weight:normal;color:#2a3440;letter-spacing:0.000px;">CAPEX Requests</div><div class="t" style="left:993.00px;top:300.68px;font-size:11.13px;font-weight:normal;color:#666c72;letter-spacing:0.069px;">% Complete:</div><div class="t" style="left:1099.50px;top:301.51px;font-size:11.80px;font-weight:normal;color:#2a3440;">0</div><div class="t" style="left:993.00px;top:327.58px;font-size:11.13px;font-weight:normal;color:#666c72;letter-spacing:0.118px;">Creation Date:</div><div class="t" style="left:1099.50px;top:328.33px;font-size:11.90px;font-weight:normal;color:#2a3440;letter-spacing:0.000px;">Feb. 28, 2018 05:46 PM</div><div class="t" style="left:727.50px;top:403.98px;font-size:12.66px;font-weight:normal;color:#0a6ebd;letter-spacing:0.000px;">Add Attachment</div><div class="t" style="left:721.50px;top:459.96px;font-size:11.98px;font-weight:bold;color:#737b84;letter-spacing:0.000px;">Description</div><div class="t" style="left:830.50px;top:460.70px;font-size:11.34px;font-weight:bold;color:#737b84;letter-spacing:0.000px;">Discussion</div><div class="t" style="left:934.00px;top:460.50px;font-size:11.58px;font-weight:bold;color:#737b84;letter-spacing:0.000px;">Subtasks</div><div class="t" style="left:1028.00px;top:460.06px;font-size:12.10px;font-weight:bold;color:#0a6ebd;letter-spacing:0.000px;">Time Spent</div><div class="t" style="left:1135.00px;top:460.01px;font-size:12.16px;font-weight:bold;color:#737b84;letter-spacing:0.000px;">History</div><div class="t" style="left:727.50px;top:493.76px;font-size:12.33px;font-weight:normal;color:#0a6ebd;letter-spacing:0.000px;">Log time</div><div class="t" style="left:808.70px;top:494.77px;font-size:11.97px;font-weight:normal;color:#0a6ebd;letter-spacing:0.000px;">Refresh</div><div class="t" style="left:953.00px;top:493.88px;font-size:12.43px;font-weight:normal;color:#737b84;letter-spacing:0.000px;">Time spent on this task: 0 days, including subtasks: 0 days</div><div class="t" style="left:710.20px;top:525.98px;font-size:11.13px;font-weight:normal;color:#555c63;letter-spacing:0.091px;">Time Spent:</div><div class="t" style="left:880.40px;top:526.01px;font-size:11.09px;font-weight:normal;color:#555c63;letter-spacing:0.000px;">Date:</div><div class="t" style="left:711.00px;top:549.46px;font-size:12.34px;font-weight:normal;color:#222;letter-spacing:0.000px;">30m</div><div class="t" style="left:881.20px;top:549.20px;font-size:12.64px;font-weight:normal;color:#222;letter-spacing:0.000px;">08/02/18</div><div class="t" style="left:710.20px;top:581.38px;font-size:11.13px;font-weight:normal;color:#555c63;letter-spacing:0.309px;">Comment:</div><div class="t" style="left:717.20px;top:687.15px;font-size:10.81px;font-weight:bold;color:#fff;letter-spacing:-0.149px;">Log time</div><div class="t" style="left:792.50px;top:687.15px;font-size:10.81px;font-weight:bold;color:#fff;letter-spacing:-0.290px;">Cancel</div>
</body></html>
